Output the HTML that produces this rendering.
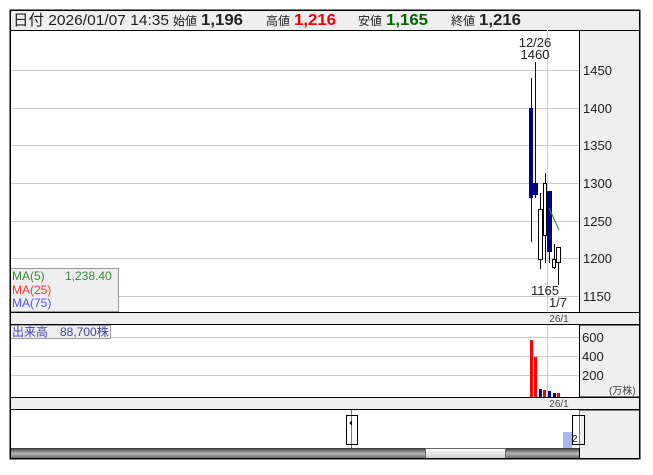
<!DOCTYPE html>
<html><head><meta charset="utf-8"><style>
body{margin:0;background:#fff;width:653px;height:470px;overflow:hidden;font-family:"Liberation Sans","Noto Sans CJK JP",sans-serif}
svg text{font-family:"Liberation Sans","Noto Sans CJK JP",sans-serif}
</style></head><body>
<svg width="653" height="470" xmlns="http://www.w3.org/2000/svg" shape-rendering="crispEdges">
<rect x="10" y="10" width="630" height="449" fill="#fff" stroke="#000"/>
<rect x="10.5" y="10.5" width="629" height="20" fill="#efefef" stroke="#000"/>
<text x="13" y="25" font-size="15" fill="#222" textLength="156" lengthAdjust="spacingAndGlyphs">日付 2026/01/07 14:35</text>
<text x="173" y="25" font-size="12" fill="#222">始値</text>
<text x="201" y="25" font-weight="bold" font-size="16" fill="#222" textLength="42" lengthAdjust="spacingAndGlyphs">1,196</text>
<text x="266" y="25" font-size="12" fill="#222">高値</text>
<text x="294" y="25" font-weight="bold" font-size="16" fill="#e00" textLength="42" lengthAdjust="spacingAndGlyphs">1,216</text>
<text x="358" y="25" font-size="12" fill="#222">安値</text>
<text x="386" y="25" font-weight="bold" font-size="16" fill="#006600" textLength="42" lengthAdjust="spacingAndGlyphs">1,165</text>
<text x="451" y="25" font-size="12" fill="#222">終値</text>
<text x="479" y="25" font-weight="bold" font-size="16" fill="#222" textLength="42" lengthAdjust="spacingAndGlyphs">1,216</text>
<rect x="579.5" y="30.5" width="60" height="282" fill="#efefef" stroke="#000"/>
<g stroke="#ccc">
<line x1="10" y1="70.5" x2="579" y2="70.5"/><line x1="10" y1="108.5" x2="579" y2="108.5"/>
<line x1="10" y1="145.5" x2="579" y2="145.5"/><line x1="10" y1="183.5" x2="579" y2="183.5"/>
<line x1="10" y1="221.5" x2="579" y2="221.5"/><line x1="10" y1="258.5" x2="579" y2="258.5"/>
<line x1="10" y1="296.5" x2="579" y2="296.5"/>
<line x1="547.5" y1="30" x2="547.5" y2="312"/>
<line x1="547.5" y1="325" x2="547.5" y2="397"/>
</g>
<g font-size="13" fill="#222">
<text x="583" y="75">1450</text><text x="583" y="113">1400</text><text x="583" y="150">1350</text>
<text x="583" y="188">1300</text><text x="583" y="226">1250</text><text x="583" y="263">1200</text>
<text x="583" y="301">1150</text></g>
<g>
<line x1="531.5" y1="78" x2="531.5" y2="242" stroke="#00008b"/>
<rect x="529" y="108" width="4" height="90" fill="#00008b"/>
<line x1="535.5" y1="62" x2="535.5" y2="198" stroke="#00008b"/>
<rect x="533" y="183" width="5" height="12" fill="#00008b"/>
<line x1="540.5" y1="193" x2="540.5" y2="269" stroke="#000"/>
<rect x="538.5" y="209.5" width="4" height="50" fill="#fff" stroke="#000"/>
<line x1="545.5" y1="173" x2="545.5" y2="263" stroke="#000"/>
<rect x="543.5" y="183.5" width="3" height="52" fill="#fff" stroke="#000"/>
<line x1="549.5" y1="191" x2="549.5" y2="263" stroke="#00008b"/>
<rect x="547" y="191" width="5" height="61" fill="#00008b"/>
<line x1="554.5" y1="244" x2="554.5" y2="269" stroke="#000"/>
<rect x="552.5" y="259.5" width="3" height="8" fill="#fff" stroke="#000"/>
<line x1="558.5" y1="262" x2="558.5" y2="285" stroke="#000"/>
<rect x="556.5" y="247.5" width="4" height="15" fill="#fff" stroke="#000"/>
<line x1="549" y1="208" x2="559" y2="230" stroke="#228b22" shape-rendering="auto"/>
</g>
<text x="535" y="47" font-size="13" fill="#222" text-anchor="middle">12/26</text>
<text x="535" y="59" font-size="13" fill="#222" text-anchor="middle">1460</text>
<text x="545" y="295" font-size="13" fill="#222" text-anchor="middle">1165</text>
<text x="558" y="307" font-size="13" fill="#222" text-anchor="middle">1/7</text>
<rect x="10.5" y="268.5" width="108" height="43" fill="#efefef" stroke="#999"/>
<text x="12" y="280" font-size="12" fill="#3a8a3a">MA(5)</text>
<text x="65" y="280" font-size="12" fill="#3a8a3a">1,238.40</text>
<text x="12" y="294" font-size="12" fill="#f33">MA(25)</text>
<text x="12" y="307" font-size="12" fill="#55f">MA(75)</text>
<rect x="10.5" y="312.5" width="629" height="12" fill="#efefef" stroke="#000"/>
<text x="559" y="322" font-size="10" fill="#444" text-anchor="middle">26/1</text>
<rect x="579.5" y="325" width="60" height="72" fill="#efefef" stroke="#000"/>
<g stroke="#ccc"><line x1="10" y1="337.5" x2="579" y2="337.5"/><line x1="10" y1="356.5" x2="579" y2="356.5"/><line x1="10" y1="375.5" x2="579" y2="375.5"/></g>
<g font-size="13" fill="#222"><text x="582" y="342">600</text><text x="582" y="361">400</text><text x="582" y="380">200</text></g>
<text x="609" y="394" font-size="10" fill="#444">(万株)</text>
<rect x="10.5" y="325.5" width="100" height="13" fill="#efefef" stroke="#999"/>
<text x="12" y="336" font-size="12" fill="#44a">出来高　88,700株</text>
<rect x="530" y="340" width="3" height="57" fill="#f00"/>
<rect x="534" y="357" width="3" height="40" fill="#f00"/>
<rect x="539" y="389" width="3" height="8" fill="#00008b"/>
<rect x="543" y="390" width="3" height="7" fill="#f00"/>
<rect x="548" y="391" width="3" height="6" fill="#00008b"/>
<rect x="553" y="393" width="3" height="4" fill="#00008b"/>
<rect x="557" y="393" width="3" height="4" fill="#f00"/>
<rect x="10.5" y="397.5" width="629" height="12" fill="#efefef" stroke="#000"/>
<text x="559" y="407" font-size="10" fill="#444" text-anchor="middle">26/1</text>
<rect x="579.5" y="410" width="60" height="49" fill="#efefef" stroke="#000"/>
<rect x="563" y="432" width="9" height="16" fill="#aab8f0"/>
<line x1="351.5" y1="410" x2="351.5" y2="448" stroke="#29a"/>
<line x1="579.5" y1="410" x2="579.5" y2="448" stroke="#29a"/>
<rect x="346.5" y="415.5" width="11" height="29" fill="none" stroke="#000"/>
<polygon points="349,423 352,420 352,426" fill="#000"/>
<rect x="572.5" y="415.5" width="12" height="29" fill="none" stroke="#000"/>
<text x="572" y="442" font-size="10" fill="#222">2</text>
<defs><linearGradient id="g" x1="0" y1="0" x2="0" y2="1"><stop offset="0" stop-color="#333"/><stop offset="0.5" stop-color="#bbb"/><stop offset="1" stop-color="#555"/></linearGradient>
<linearGradient id="h" x1="0" y1="0" x2="0" y2="1"><stop offset="0" stop-color="#fff"/><stop offset="1" stop-color="#ccc"/></linearGradient></defs>
<rect x="10" y="448" width="569" height="11" fill="url(#g)"/>
<rect x="425.5" y="448.5" width="80" height="10" fill="url(#h)" stroke="#666"/>
<rect x="10.5" y="10.5" width="629" height="448" fill="none" stroke="#000"/>
</svg>
</body></html>
